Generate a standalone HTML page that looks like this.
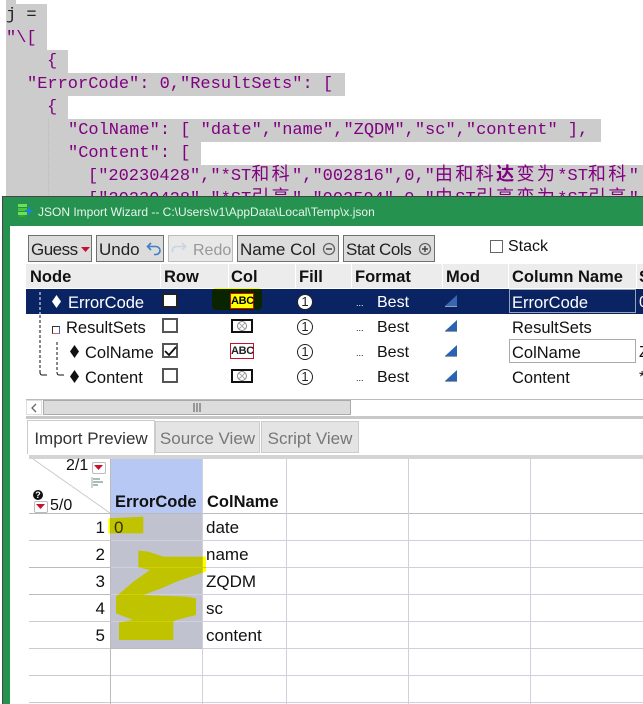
<!DOCTYPE html>
<html><head><meta charset="utf-8">
<style>
html,body{margin:0;padding:0;background:#fff}
#p{position:relative;width:643px;height:704px;overflow:hidden;background:#fff;font-family:"Liberation Sans","Noto Sans CJK SC",sans-serif;font-size:16px;color:#111}
#p div,#p svg{position:absolute}
.s{background:#ccc;left:6px}
.c{font-family:"Liberation Mono","Noto Sans CJK SC",monospace;font-size:17px;line-height:23px;height:23px;color:#800080;white-space:pre}
.c span{font-size:18px;letter-spacing:2.400px;line-height:20px}
.t{white-space:nowrap;line-height:20px;height:20px}
.b{background:#dcdcdc;border:1px solid #707070;height:25px;top:235px;box-sizing:content-box;line-height:27px;white-space:nowrap;font-size:17px;color:#222}
.h{background:#ececec;top:264px;height:24px;line-height:27px;font-weight:bold;font-size:16.500px;padding-left:4px;box-sizing:border-box;color:#111}
.w{color:#fff}
.r{font-size:16.500px}
.cb{width:16px;height:15px;border:2px solid #555;background:#fff;left:162px;box-sizing:border-box}
.f{width:16px;height:16px;border:1.500px solid #222;border-radius:50%;left:297px;text-align:center;font-size:13px;line-height:13px;background:#fff;box-sizing:border-box;color:#222}
.tab{top:421px;height:32px;background:#e4e4e4;border:1px solid #ccc;line-height:33px;text-align:center;font-size:17px;color:#777;box-sizing:border-box;white-space:nowrap}
.hl{background:#d0d0dc;height:1px;left:111px;width:532px}
.vl{background:#d0d0dc;width:1px;top:459px;height:245px}
.n{left:60px;width:45px;text-align:right;font-size:17px}
.d{font-size:17px}
</style></head><body><div id="p">
<div class="s" style="top:0;width:10px;height:4px"></div>
<div class="s" style="top:4px;width:41px;height:46px"></div>
<div class="s" style="top:50px;width:62px;height:23px"></div>
<div class="s" style="top:73px;width:339px;height:23px"></div>
<div class="s" style="top:96px;width:62px;height:23px"></div>
<div class="s" style="top:119px;width:595px;height:23px"></div>
<div class="s" style="top:142px;width:195px;height:23px"></div>
<div class="s" style="top:165px;width:637px;height:31px"></div>
<div style="left:48px;top:119px;height:77px;border-left:1px dotted #bbb"></div>
<div class="c" style="left:6px;top:4px;color:#222">j =</div>
<div class="c" style="left:6px;top:27px">"\[</div>
<div class="c" style="left:47px;top:50px">{</div>
<div class="c" style="left:27px;top:73px">"ErrorCode": 0,"ResultSets": [</div>
<div class="c" style="left:47px;top:96px">{</div>
<div class="c" style="left:68px;top:119px">"ColName": [ "date","name","ZQDM","sc","content" ],</div>
<div class="c" style="left:68px;top:142px">"Content": [</div>
<div class="c" style="left:88px;top:165px">["20230428","*ST<span>和科</span>","002816",0,"<span>由和科<b>达</b>变为</span>*ST<span>和科</span>"</div>
<div class="c" style="left:88px;top:188px">["20230428","*ST<span>引亮</span>","002594",0,"<span>由</span>ST<span>引亮变为</span>*ST<span>引亮</span>"</div>

<div style="left:2px;top:196px;width:641px;height:508px;background:#25934f;border-left:1px solid #444;border-top:1px solid #444;box-sizing:border-box"></div>
<div style="left:10px;top:226px;width:633px;height:478px;background:#fff"></div>
<svg style="left:18px;top:203px" width="15" height="15" viewBox="0 0 15 15"><rect x="0" y="1" width="9" height="3" fill="#6fe04f"/><rect x="0" y="5" width="9" height="3" fill="#49c640"/><rect x="0" y="9" width="9" height="3" fill="#6fe04f"/><rect x="1" y="12" width="6" height="2" fill="#2fa53a"/><path d="M7 8h8M11 4v8" stroke="#1f7fd0" stroke-width="2"/></svg>
<div class="t" style="left:38px;top:202px;font-size:12px;color:#e8f4ec;width:340px">JSON Import Wizard -- C:\Users\v1\AppData\Local\Temp\x.json</div>

<div class="b" style="left:28px;width:62px"><span style="margin-left:2px;letter-spacing:-.5px">Guess</span></div>
<svg style="left:81px;top:247px" width="9" height="6"><path d="M0 0h9L4.500 5z" fill="#c8102e"/></svg>
<div class="b" style="left:96px;width:66px"><span style="margin-left:2px">Undo</span></div>
<svg style="left:146px;top:241px" width="16" height="16" viewBox="0 0 16 16" fill="none"><path d="M5 2 1.500 5.500 5 9M2 5.500h8a4 4 0 0 1 0 8H8" stroke="#3f7fc4" stroke-width="1.600"/></svg>
<div class="b" style="left:168px;width:63px;background:#e8e8e8;border-color:#bbb;color:#999"><span style="margin-left:24px;font-size:16px">Redo</span></div>
<svg style="left:171px;top:241px" width="16" height="16" viewBox="0 0 16 16" fill="none"><path d="M11 2l3.500 3.500L11 9M14 5.500H6a4 4 0 0 0-4 6" stroke="#c9d4e0" stroke-width="1.600"/></svg>
<div class="b" style="left:237px;width:100px"><span style="margin-left:2px">Name Col</span></div>
<svg style="left:322px;top:242px" width="14" height="14" fill="none"><circle cx="7" cy="7" r="5.500" stroke="#666" stroke-width="1.300"/><path d="M4 7h6" stroke="#444" stroke-width="1.500"/></svg>
<div class="b" style="left:343px;width:90px"><span style="margin-left:2px;letter-spacing:-.4px">Stat Cols</span></div>
<svg style="left:418px;top:242px" width="14" height="14" fill="none"><circle cx="7" cy="7" r="5.500" stroke="#666" stroke-width="1.300"/><path d="M4 7h6M7 4v6" stroke="#444" stroke-width="1.500"/></svg>
<div style="left:490px;top:240px;width:11px;height:11px;border:1px solid #666"></div>
<div class="t" style="left:508px;top:237px;font-size:16px">Stack</div>

<div class="h" style="left:26px;width:134px">Node</div>
<div class="h" style="left:161px;width:67px;padding-left:3px">Row</div>
<div class="h" style="left:229px;width:66px;padding-left:2px">Col</div>
<div class="h" style="left:296px;width:55px;padding-left:3px">Fill</div>
<div class="h" style="left:352px;width:90px;padding-left:3px">Format</div>
<div class="h" style="left:443px;width:65px;padding-left:3px">Mod</div>
<div class="h" style="left:509px;width:127px;padding-left:3px">Column Name</div>
<div class="h" style="left:637px;width:6px;padding-left:2px">S</div>

<div style="left:26px;top:289px;width:617px;height:25px;background:#0a2463"></div>
<svg style="left:26px;top:289px" width="50" height="90" fill="none"><path d="M14 3V25" stroke="#fff" stroke-width="1" stroke-dasharray="3 2"/><path d="M14 26V84" stroke="#111" stroke-width="1" stroke-dasharray="3 2"/><path d="M31 53V84" stroke="#111" stroke-width="1" stroke-dasharray="3 2"/><path d="M14 83q0 3 2 3h5M31 83q0 3 2 3h5" stroke="#111" stroke-width="1"/></svg>

<svg style="left:52px;top:295px" width="9" height="13"><path d="M4.500 0 9 6.500 4.500 13 0 6.500z" fill="#fff"/></svg>
<div style="left:52px;top:326px;width:6px;height:6px;border:1px solid #333;border-bottom-color:#c66;border-right-color:#36c"></div>
<svg style="left:70px;top:345px" width="9" height="13"><path d="M4.500 0 9 6.500 4.500 13 0 6.500z" fill="#111"/></svg>
<svg style="left:70px;top:370px" width="9" height="13"><path d="M4.500 0 9 6.500 4.500 13 0 6.500z" fill="#111"/></svg>
<div class="t w r" style="left:68px;top:293px">ErrorCode</div>
<div class="t r" style="left:66px;top:318px">ResultSets</div>
<div class="t r" style="left:85px;top:343px">ColName</div>
<div class="t r" style="left:85px;top:368px">Content</div>

<div class="cb" style="top:293px;border-color:#222"></div>
<div class="cb" style="top:318px"></div>
<div class="cb" style="top:343px"></div>
<svg style="left:164px;top:345px" width="13" height="13" fill="none"><path d="M1 6l4 4 7-8" stroke="#111" stroke-width="1.800"/></svg>
<div class="cb" style="top:368px"></div>

<div style="left:230px;top:293px;width:22px;height:14px;border:1px solid #c8102e;background:#fff;color:#000;font-weight:bold;font-size:11px;line-height:14px;text-align:center;letter-spacing:-.3px">ABC</div>
<div style="left:230px;top:343px;width:22px;height:14px;border:1px solid #c8102e;background:#fff;color:#222;font-weight:bold;font-size:11px;line-height:14px;text-align:center;letter-spacing:-.3px">ABC</div>
<svg style="left:231px;top:319px" width="22" height="14" fill="none"><rect x="1" y="1" width="20" height="12" stroke="#111" stroke-width="2"/><circle cx="11" cy="7" r="4.500" stroke="#888"/><path d="M8 4l6 6M14 4l-6 6" stroke="#aaa"/></svg>
<svg style="left:231px;top:369px" width="22" height="14" fill="none"><rect x="1" y="1" width="20" height="12" stroke="#111" stroke-width="2"/><circle cx="11" cy="7" r="4.500" stroke="#888"/><path d="M8 4l6 6M14 4l-6 6" stroke="#aaa"/></svg>

<div class="f" style="top:294px">1</div>
<div class="f" style="top:319px">1</div>
<div class="f" style="top:344px">1</div>
<div class="f" style="top:369px">1</div>

<div class="t w" style="left:356px;top:291px;font-size:9px;line-height:24px">...</div>
<div class="t" style="left:356px;top:316px;font-size:9px;line-height:24px">...</div>
<div class="t" style="left:356px;top:341px;font-size:9px;line-height:24px">...</div>
<div class="t" style="left:356px;top:366px;font-size:9px;line-height:24px">...</div>
<div class="t w" style="left:377px;top:293px">Best</div>
<div class="t" style="left:377px;top:318px">Best</div>
<div class="t" style="left:377px;top:343px">Best</div>
<div class="t" style="left:377px;top:368px">Best</div>

<svg style="left:445px;top:295px" width="12" height="12"><path d="M0 11 12 0V12H0z" fill="#3a66ad"/><path d="M0 11h12v1H0z" fill="#8fa0c0"/></svg>
<svg style="left:445px;top:320px" width="12" height="12"><path d="M0 11 12 0V12H0z" fill="#2c62b4"/><path d="M0 11h12v1H0z" fill="#999"/></svg>
<svg style="left:445px;top:345px" width="12" height="12"><path d="M0 11 12 0V12H0z" fill="#2c62b4"/><path d="M0 11h12v1H0z" fill="#999"/></svg>
<svg style="left:445px;top:370px" width="12" height="12"><path d="M0 11 12 0V12H0z" fill="#2c62b4"/><path d="M0 11h12v1H0z" fill="#999"/></svg>

<div style="left:509px;top:289px;width:125px;height:22px;border:1px solid #9aa3b5"></div>
<div style="left:509px;top:339px;width:125px;height:22px;border:1px solid #aaa"></div>
<div class="t w r" style="left:512px;top:293px">ErrorCode</div>
<div class="t r" style="left:512px;top:318px">ResultSets</div>
<div class="t r" style="left:512px;top:343px">ColName</div>
<div class="t r" style="left:512px;top:368px">Content</div>
<div class="t w" style="left:639px;top:293px">0</div>
<div class="t" style="left:639px;top:343px">Z</div>
<div class="t" style="left:639px;top:368px">*</div>

<div style="left:26px;top:399px;width:617px;height:1px;background:#bbb"></div>
<div style="left:26px;top:400px;width:16px;height:15px;background:#fff;border:1px solid #ddd;box-sizing:border-box"></div>
<svg style="left:31px;top:403px" width="7" height="10" fill="none"><path d="M5 1 1 5l4 4" stroke="#666" stroke-width="1.300"/></svg>
<div style="left:43px;top:400px;width:308px;height:15px;background:#dcdcdc;border:1px solid #aaa;box-sizing:border-box"></div>
<svg style="left:193px;top:403px" width="8" height="9"><path d="M1 0v9M4 0v9M7 0v9" stroke="#555"/></svg>
<div style="left:26px;top:416px;width:617px;height:3px;background:#c8c8c8"></div>

<div class="tab" style="left:27px;top:420px;width:128px;height:34px;background:#fff;color:#333;border-bottom:none;line-height:36px">Import Preview</div>
<div class="tab" style="left:155px;width:105px">Source View</div>
<div class="tab" style="left:261px;width:98px">Script View</div>
<div style="left:29px;top:455px;width:614px;height:4px;background:#d4d4d4"></div>

<div style="left:111px;top:459px;width:91px;height:54px;background:#b8c8f4"></div>
<div style="left:111px;top:514px;width:91px;height:134px;background:#c0c3cf"></div>
<div class="hl" style="top:513px;background:#bbb"></div>
<div class="hl" style="top:540px"></div>
<div class="hl" style="top:567px"></div>
<div class="hl" style="top:594px"></div>
<div class="hl" style="top:621px"></div>
<div class="hl" style="top:648px;background:#bbb;width:91px"></div>
<div class="hl" style="top:648px;left:202px;width:441px"></div>
<div class="hl" style="top:675px"></div>
<div class="hl" style="top:702px"></div>
<div style="left:29px;top:513px;width:81px;height:1px;background:#bbb"></div>
<div style="left:29px;top:540px;width:81px;height:1px;background:#ccc"></div>
<div style="left:29px;top:567px;width:81px;height:1px;background:#bbb"></div>
<div style="left:29px;top:594px;width:81px;height:1px;background:#bbb"></div>
<div style="left:29px;top:621px;width:81px;height:1px;background:#ccc"></div>
<div style="left:29px;top:648px;width:81px;height:1px;background:#ccc"></div>
<div style="left:29px;top:675px;width:81px;height:1px;background:#ccc"></div>
<div style="left:29px;top:702px;width:81px;height:1px;background:#ccc"></div>
<div class="vl" style="left:110px;background:#bbb"></div>
<div class="vl" style="left:202px"></div>
<div class="vl" style="left:286px"></div>
<div class="vl" style="left:408px"></div>
<div class="vl" style="left:530px"></div>

<svg style="left:29px;top:459px" width="82" height="55"><path d="M4 0 81 54" stroke="#ccc" fill="none"/></svg>
<div class="t" style="left:66px;top:456px;font-size:16px">2/1</div>
<div style="left:92px;top:462px;width:12px;height:10px;border:1px solid #bbb;background:#fff;border-radius:2px"></div>
<svg style="left:94px;top:465px" width="9" height="6"><path d="M0 0h9L4.500 5z" fill="#c8102e"/></svg>
<svg style="left:91px;top:477px" width="12" height="11"><path d="M1 0v11" stroke="#9ab"/><path d="M2 2h7M2 5h10M2 8h5" stroke="#8fa89a" stroke-width="1.500"/></svg>
<div style="left:33px;top:490px;width:10px;height:10px;border-radius:50%;background:#111;color:#fff;font-size:9px;font-weight:bold;line-height:10px;text-align:center">?</div>
<div style="left:34px;top:501px;width:12px;height:10px;border:1px solid #bbb;background:#fff;border-radius:2px"></div>
<svg style="left:36px;top:504px" width="9" height="6"><path d="M0 0h9L4.500 5z" fill="#c8102e"/></svg>
<div class="t" style="left:50px;top:496px">5/0</div>

<div class="t" style="left:115px;top:492px;font-weight:bold;font-size:16.500px">ErrorCode</div>
<div class="t" style="left:207px;top:492px;font-weight:bold;font-size:16.500px">ColName</div>

<div class="t n" style="top:518px">1</div>
<div class="t n" style="top:545px">2</div>
<div class="t n" style="top:572px">3</div>
<div class="t n" style="top:599px">4</div>
<div class="t n" style="top:626px">5</div>
<div class="t d" style="left:114px;top:518px;color:#333">0</div>
<div class="t d" style="left:206px;top:518px">date</div>
<div class="t d" style="left:206px;top:545px">name</div>
<div class="t d" style="left:206px;top:572px">ZQDM</div>
<div class="t d" style="left:206px;top:599px">sc</div>
<div class="t d" style="left:206px;top:626px">content</div>

<div style="left:212px;top:288px;width:50px;height:22px;background:#ff0;border-radius:4px;mix-blend-mode:multiply"></div>
<svg style="left:0;top:395px;mix-blend-mode:multiply" width="360" height="309" viewBox="0 0 1080 927"><path d="M325 370 430 365V415H325zM415 467 445 470 490 485H618V530L530 560 490 578 430 600 560 605 588 610V660L530 675 520 680V735H357V682L400 675 348 655V605L400 560 450 525 415 517z" fill="#ff0"/></svg>
</div></body></html>
